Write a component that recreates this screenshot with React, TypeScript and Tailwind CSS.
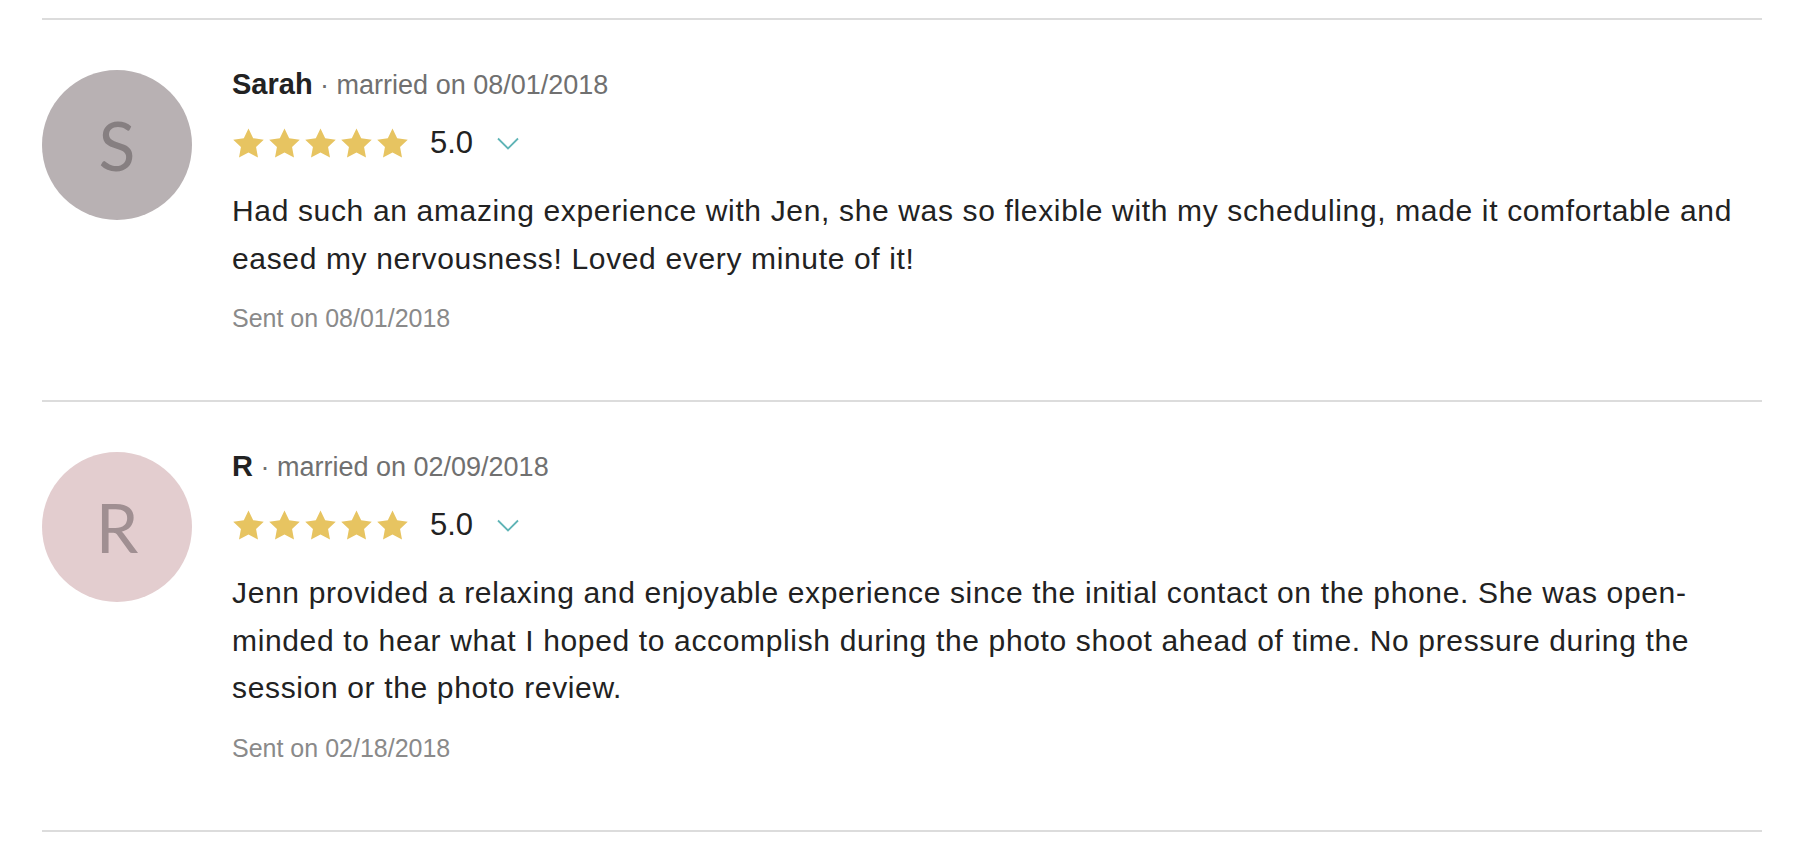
import React from "react";

type Review = {
  initial: string;
  name: string;
  married: string;
  rating: string;
  text: string;
  sent: string;
  avatarBg: string;
  avatarFg: string;
};

const REVIEWS: Review[] = [
  {
    initial: "S",
    name: "Sarah",
    married: "08/01/2018",
    rating: "5.0",
    text: "Had such an amazing experience with Jen, she was so flexible with my scheduling, made it comfortable and eased my nervousness! Loved every minute of it!",
    sent: "08/01/2018",
    avatarBg: "bg-[#b8b1b3]",
    avatarFg: "text-[#867f81]",
  },
  {
    initial: "R",
    name: "R",
    married: "02/09/2018",
    rating: "5.0",
    text: "Jenn provided a relaxing and enjoyable experience since the initial contact on the phone. She was open-minded to hear what I hoped to accomplish during the photo shoot ahead of time. No pressure during the session or the photo review.",
    sent: "02/18/2018",
    avatarBg: "bg-[#e3cdcf]",
    avatarFg: "text-[#a08f92]",
  },
];

function Star() {
  return (
    <svg width="33" height="31" viewBox="0 0 24 22.5" className="shrink-0">
      <path
        d="M12 0.4l3.4 7 7.7 1.1-5.6 5.3 1.4 7.6L12 17.8l-6.9 3.6 1.4-7.6L0.9 8.5l7.7-1.1z"
        fill="#e7c461"
      />
    </svg>
  );
}

function Chevron() {
  return (
    <svg width="22" height="13" viewBox="0 0 22 13" fill="none" className="shrink-0">
      <path d="M1 1.5l10 10 10-10" stroke="#5fb4b6" strokeWidth="1.8" />
    </svg>
  );
}

function ReviewItem({ review }: { review: Review }) {
  return (
    <div className="border-t-2 border-[#dcdcdc] pt-[47px] pb-[67px]">
      <div className="flex gap-[40px]">
        {/* Avatar */}
        <div
          className={`mt-[3px] flex h-[150px] w-[150px] shrink-0 items-center justify-center rounded-full ${review.avatarBg}`}
        >
          <span
            className={`text-[68px] font-normal leading-none ${review.avatarFg}`}
            style={{ fontFamily: "Lato, 'Liberation Sans', sans-serif" }}
          >
            {review.initial}
          </span>
        </div>

        {/* Content */}
        <div className="min-w-0 flex-1">
          <div className="h-[35px] leading-[35px] whitespace-nowrap">
            <span className="text-[29px] font-bold text-[#222222]">{review.name}</span>
            <span className="text-[27px] text-[#707070]"> · married on {review.married}</span>
          </div>

          <div className="mt-[23px] flex h-[36px] items-center">
            <div className="flex gap-[3px]">
              <Star />
              <Star />
              <Star />
              <Star />
              <Star />
            </div>
            <span className="ml-[21px] text-[31px] leading-[36px] text-[#222222]">{review.rating}</span>
            <span className="ml-[24px] flex items-center">
              <Chevron />
            </span>
          </div>

          <p className="mt-[26px] text-[30px] leading-[47.5px] tracking-[0.65px] text-[#222222]">
            {review.text}
          </p>

          <div className="mt-[21px] text-[25px] leading-[30px] text-[#8a8a8a]">Sent on {review.sent}</div>
        </div>
      </div>
    </div>
  );
}

export default function App() {
  return (
    <div
      className="min-h-screen bg-white pt-[18px]"
      style={{ fontFamily: "'Liberation Sans', Arial, sans-serif" }}
    >
      <div className="ml-[42px] w-[1720px] border-b-2 border-[#dcdcdc]">
        {REVIEWS.map((r) => (
          <ReviewItem key={r.sent} review={r} />
        ))}
      </div>
    </div>
  );
}
